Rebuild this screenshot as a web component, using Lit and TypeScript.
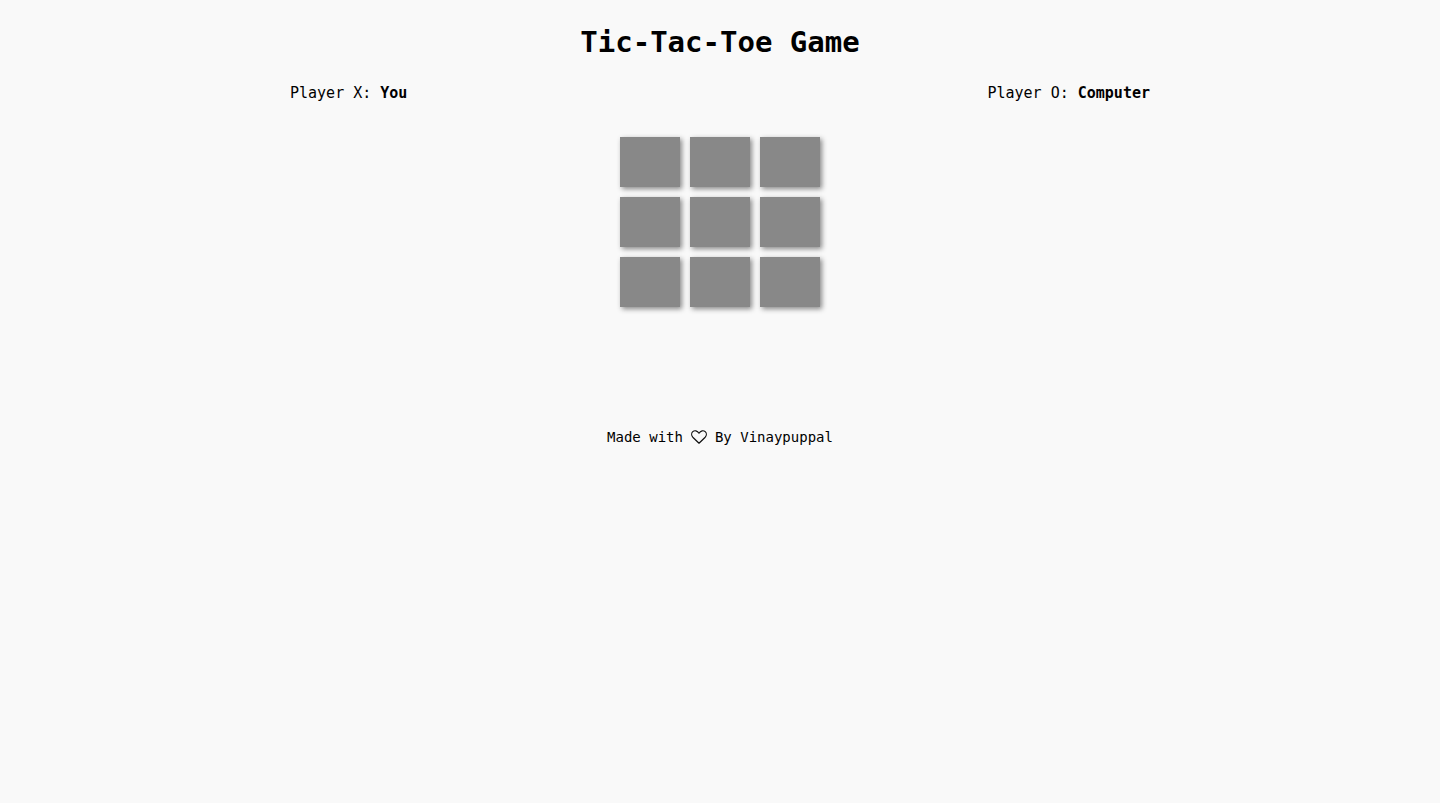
import { LitElement, html, css } from "lit";
import { customElement, state } from "lit/decorators.js";

@customElement("app-root")
export class AppRoot extends LitElement {
  @state() private cells: string[] = Array(9).fill("");

  static styles = css`
    :host {
      display: block;
      box-sizing: border-box;
      min-height: 100vh;
      background: #f9f9f9;
      color: #000;
      font-family: "DejaVu Sans Mono", monospace;
      font-size: 15px;
      line-height: 20px;
    }
    .title {
      margin: 0;
      padding: 22px 0 21px;
      font-size: 29px;
      line-height: 40px;
      text-align: center;
    }
    .players {
      display: flex;
      justify-content: space-around;
    }
    .player {
      margin: 0;
    }
    .board {
      display: grid;
      grid-template-columns: repeat(3, 60px);
      grid-auto-rows: 50px;
      gap: 10px;
      justify-content: center;
      margin-top: 34px;
    }
    .cell {
      border: 0;
      padding: 0;
      background: #888;
      color: #fff;
      font: inherit;
      font-size: 29px;
      box-shadow: 2px 2px 5px #888;
      cursor: pointer;
    }
    .footer {
      display: flex;
      justify-content: center;
      align-items: center;
      gap: 8px;
      margin-top: 120px;
      font-size: 14px;
    }
    .heart {
      width: 16px;
      height: 16px;
    }
  `;

  private play(index: number) {
    if (this.cells[index]) return;
    const next = [...this.cells];
    next[index] = "X";
    const free = next.flatMap((value, i) => (value ? [] : [i]));
    if (free.length) next[free[Math.floor(Math.random() * free.length)]] = "O";
    this.cells = next;
  }

  render() {
    return html`
      <header>
        <h1 class="title">Tic-Tac-Toe Game</h1>
      </header>
      <main>
        <div class="players">
          <p class="player">Player X: <strong>You</strong></p>
          <p class="player">Player O: <strong>Computer</strong></p>
        </div>
        <div class="board">
          ${this.cells.map(
            (value, i) => html`<button
              class="cell"
              type="button"
              aria-label="Cell ${i + 1}"
              @click=${() => this.play(i)}
            >${value}</button>`
          )}
        </div>
      </main>
      <footer class="footer">
        <span>Made with</span>
        <svg class="heart" viewBox="0 0 16 16" fill="none" stroke="#111" stroke-width="1.2" stroke-linejoin="round" aria-hidden="true">
          <path d="M8 14.2 L1.8 8.2 C0.2 6.4 0.4 3.9 1.8 2.6 C3.5 1.2 6.3 1.5 8 4.2 C9.7 1.5 12.5 1.2 14.2 2.6 C15.6 3.9 15.8 6.4 14.2 8.2 Z" />
        </svg>
        <span>By Vinaypuppal</span>
      </footer>
    `;
  }
}
